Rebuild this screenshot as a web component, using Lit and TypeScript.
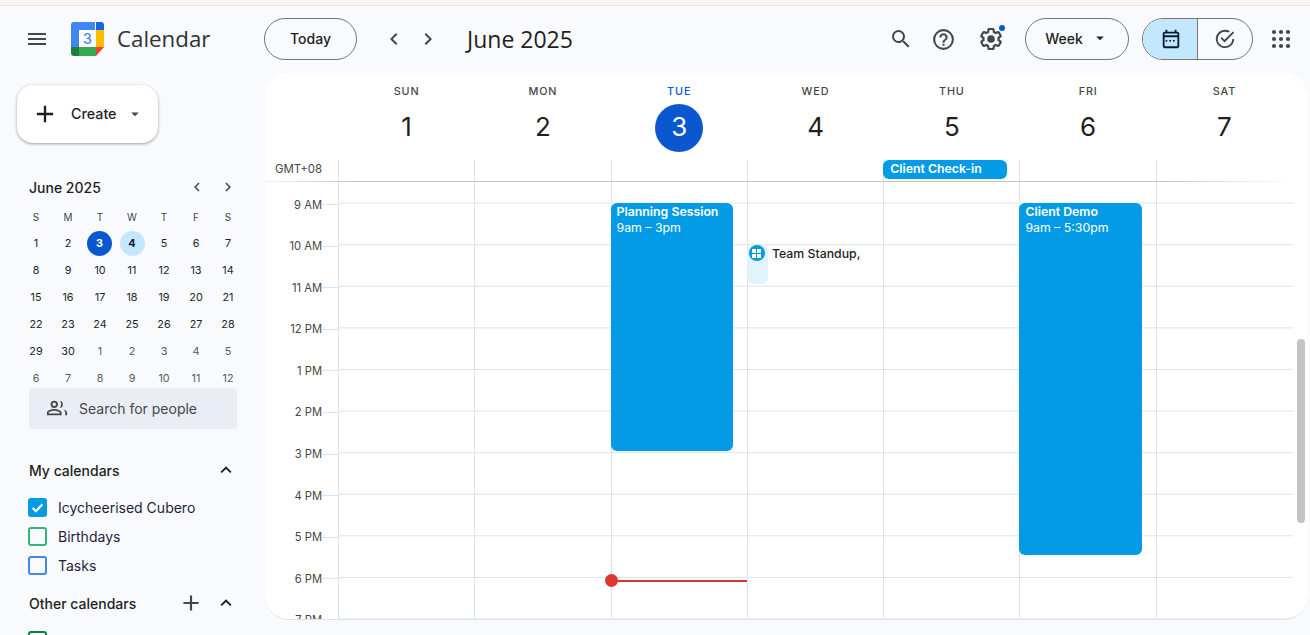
import { LitElement, html, css, svg } from 'lit';
import { customElement } from 'lit/decorators.js';

const icon = (size: number, body: unknown, fill = '#444746') => html`
  <svg width=${size} height=${size} viewBox="0 0 24 24" fill=${fill}>${body}</svg>
`;

const chevLeft = svg`<path d="M15.4 7.4 14 6l-6 6 6 6 1.4-1.4-4.6-4.6z"/>`;
const chevRight = svg`<path d="M8.6 16.6 10 18l6-6-6-6-1.4 1.4 4.6 4.6z"/>`;
const chevUp = svg`<path d="M7.4 15.4 12 10.8l4.6 4.6L18 14l-6-6-6 6z"/>`;
const caret = svg`<path d="M7 10l5 5 5-5z"/>`;
const plus = svg`<path d="M19 13h-6v6h-2v-6H5v-2h6V5h2v6h6z"/>`;
const menu = svg`<path d="M3 18h18v-2H3zm0-5h18v-2H3zm0-7v2h18V6z"/>`;
const search = svg`<path d="M15.5 14h-.79l-.28-.27A6.471 6.471 0 0 0 16 9.5 6.5 6.5 0 1 0 9.5 16c1.61 0 3.09-.59 4.23-1.57l.27.28v.79l5 4.99L20.49 19l-4.99-5zm-6 0C7.01 14 5 11.99 5 9.5S7.01 5 9.5 5 14 7.01 14 9.5 11.99 14 9.5 14z"/>`;
const help = svg`<path d="M11 18h2v-2h-2zm1-16a10 10 0 1 0 0 20 10 10 0 0 0 0-20zm0 18a8 8 0 1 1 0-16 8 8 0 0 1 0 16zm0-14a4 4 0 0 0-4 4h2a2 2 0 1 1 4 0c0 2-3 1.75-3 5h2c0-2.25 3-2.5 3-5a4 4 0 0 0-4-4z"/>`;
const gear = svg`<path d="M13.85 22.25h-3.7c-.74 0-1.36-.54-1.45-1.27l-.27-1.89c-.27-.14-.53-.29-.79-.46l-1.8.72c-.7.26-1.47-.03-1.81-.65L2.2 15.53c-.35-.66-.2-1.44.36-1.88l1.53-1.19c-.01-.15-.02-.3-.02-.46s.01-.31.02-.46l-1.52-1.19c-.59-.45-.74-1.26-.37-1.88l1.85-3.19c.34-.62 1.11-.9 1.79-.63l1.81.73c.26-.17.52-.32.78-.46l.27-1.91c.09-.7.71-1.26 1.44-1.26h3.7c.74 0 1.36.54 1.45 1.27l.27 1.89c.27.14.53.29.79.46l1.8-.72c.71-.26 1.48.03 1.82.65l1.84 3.18c.36.66.2 1.44-.36 1.88l-1.52 1.19c.01.15.02.3.02.46s-.01.31-.02.46l1.52 1.19c.56.45.72 1.23.37 1.86l-1.86 3.22c-.34.62-1.11.9-1.8.63l-1.8-.72c-.26.17-.52.32-.78.46l-.27 1.91c-.1.68-.72 1.22-1.46 1.22zm-3.23-2h2.76l.37-2.55.53-.22c.44-.18.88-.44 1.34-.78l.45-.34 2.38.96 1.38-2.4-2.03-1.58.07-.56c.03-.26.06-.51.06-.78s-.03-.53-.06-.78l-.07-.56 2.03-1.58-1.39-2.4-2.39.96-.45-.35c-.42-.32-.87-.58-1.33-.77l-.52-.22-.37-2.55h-2.76l-.37 2.55-.53.21c-.44.19-.88.44-1.34.79l-.45.33-2.38-.95-1.39 2.39 2.03 1.58-.07.56a7 7 0 0 0-.06.79c0 .26.02.53.06.78l.07.56-2.03 1.58 1.38 2.4 2.39-.96.45.35c.43.33.86.58 1.33.77l.53.22.38 2.55zM12 15.5a3.5 3.5 0 1 1 0-7 3.5 3.5 0 0 1 0 7z"/>`;
const calIcon = svg`<path d="M5 22a2 2 0 0 1-2-2V6a2 2 0 0 1 2-2h1V2h2v2h8V2h2v2h1a2 2 0 0 1 2 2v14a2 2 0 0 1-2 2zm0-2h14V10H5zM5 8h14V6H5zm3 6a1 1 0 1 1 0-.01zm4 0a1 1 0 1 1 0-.01zm4 0a1 1 0 1 1 0-.01z"/>`;
const taskIcon = svg`<path d="M22 5.2 20.6 3.8 11.5 12.9 8.4 9.8 7 11.2l4.5 4.5zM12 20a8 8 0 1 1 3.9-15l1.5-1.5A10 10 0 1 0 22 12h-2a8 8 0 0 1-8 8z"/>`;
const people = svg`<path d="M9 12a4 4 0 1 0 0-8 4 4 0 0 0 0 8zm0-6a2 2 0 1 1 0 4 2 2 0 0 1 0-4zm0 7c-2.7 0-8 1.3-8 4v3h16v-3c0-2.7-5.3-4-8-4zm6 5H3v-1c.2-.7 3.300-2 6-2s5.800 1.300 6 2zm.5-6.100A4 4 0 0 0 15 4.100a6 6 0 0 1 0 7.800zM19 13.500c1.300.9 2 2 2 3.500v3h2v-3c0-1.900-2.300-3.100-4-3.500z"/>`;
const appsDots = [5, 12, 19].flatMap((y) =>
  [5, 12, 19].map((x) => svg`<circle cx=${x} cy=${y} r="2.1"/>`)
);

const logo = html`
  <svg width="33" height="34" viewBox="0 0 33 34">
    <path d="M3 0h21v8H8v17H0V3a3 3 0 0 1 3-3z" fill="#4285f4"/>
    <path d="M25 0h5a3 3 0 0 1 3 3v5h-8z" fill="#1967d2"/>
    <rect x="25" y="8" width="8" height="17" fill="#fbbc04"/>
    <rect x="8" y="25" width="17" height="9" fill="#34a853"/>
    <path d="M0 25h8v9H3a3 3 0 0 1-3-3z" fill="#188038"/>
    <path d="M25 25h8l-8 9z" fill="#ea4335"/>
    <rect x="8" y="8" width="17" height="17" fill="#fff"/>
    <text x="16.500" y="22" text-anchor="middle" font-size="14" font-weight="500" font-family="Inter, sans-serif" fill="#4285f4">3</text>
  </svg>
`;

const WEEK = [
  { name: 'SUN', num: 1 },
  { name: 'MON', num: 2 },
  { name: 'TUE', num: 3, today: true },
  { name: 'WED', num: 4 },
  { name: 'THU', num: 5 },
  { name: 'FRI', num: 6 },
  { name: 'SAT', num: 7 },
];

const HOURS = ['9 AM', '10 AM', '11 AM', '12 PM', '1 PM', '2 PM', '3 PM', '4 PM', '5 PM', '6 PM', '7 PM'];

const MINI_HEAD = ['S', 'M', 'T', 'W', 'T', 'F', 'S'];
const MINI_DAYS = [
  1, 2, 3, 4, 5, 6, 7, 8, 9, 10, 11, 12, 13, 14, 15, 16, 17, 18, 19, 20, 21,
  22, 23, 24, 25, 26, 27, 28, 29, 30, 1, 2, 3, 4, 5, 6, 7, 8, 9, 10, 11, 12,
];

@customElement('app-root')
export class AppRoot extends LitElement {
  static styles = css`
    :host {
      display: block;
      width: 1310px;
      height: 635px;
      overflow: hidden;
      background: #f8fafd;
      color: #1f1f1f;
      font-family: Inter, 'Liberation Sans', sans-serif;
      --line: #dde3ea;
    }
    svg { display: block; flex: none; }
    .strip {
      height: 5px;
      background: #fdf4f1;
      border-bottom: 1px solid #eadfe2;
    }

    .topbar {
      height: 67px;
      display: flex;
      align-items: center;
      padding-bottom: 1px;
      box-sizing: border-box;
    }
    .brand {
      width: 264px;
      box-sizing: border-box;
      padding-left: 25px;
      display: flex;
      align-items: center;
    }
    .brand .logo { margin-left: 22px; }
    .brand .word {
      margin-left: 13px;
      padding-bottom: 2px;
      font-family: 'Open Sans', sans-serif;
      font-size: 22.3px;
      color: #303134;
    }
    .pill {
      box-sizing: border-box;
      height: 42px;
      padding-bottom: 2px;
      border: 1px solid #747775;
      border-radius: 21px;
      display: flex;
      align-items: center;
      justify-content: center;
      font-size: 14px;
      font-weight: 500;
    }
    .today-btn { width: 93px; }
    .nav { display: flex; gap: 10px; margin-left: 25px; }
    .title { margin-left: 27px; font-size: 23px; font-family: 'Open Sans', sans-serif; }
    .spacer { flex: 1; }
    .tools { display: flex; align-items: center; gap: 18px; }
    .gear { position: relative; margin-left: 4px; }
    .gear::after {
      content: '';
      position: absolute;
      top: -1px;
      right: -1px;
      width: 6px;
      height: 6px;
      border-radius: 50%;
      background: #0b57d0;
    }
    .week { width: 104px; margin-left: 21px; gap: 8px; }
    .toggle {
      box-sizing: border-box;
      width: 111px;
      height: 42px;
      margin-left: 13px;
      border: 1px solid #747775;
      border-radius: 21px;
      display: flex;
      overflow: hidden;
    }
    .toggle div { flex: 1; display: flex; align-items: center; justify-content: center; }
    .toggle .on { background: #c2e7ff; border-right: 1px solid #747775; flex: none; width: 55px; padding-left: 2px; box-sizing: border-box; }
    .apps { margin: 0 17px 0 16px; }

    .body { display: flex; height: 562px; }
    .side { width: 265px; flex: none; box-sizing: border-box; padding: 12px 0 0 17px; overflow: hidden; }
    .create {
      width: 141px;
      height: 58px;
      box-sizing: border-box;
      padding-left: 14px;
      background: #fff;
      border-radius: 16px;
      box-shadow: 0 1px 3px 1px rgba(60, 64, 67, .15), 0 1px 2px rgba(60, 64, 67, .3);
      display: flex;
      align-items: center;
      font-size: 14.3px;
      font-weight: 500;
    }
    .create span { margin: 0 9px 2px 12px; }

    .mini { width: 224px; margin: 30px 0 0 3px; }
    .mini-head {
      display: flex;
      align-items: center;
      height: 28px;
      padding-left: 9px;
      font-size: 14px;
      font-weight: 500;
      gap: 13px;
    }
    .mini-head .name { flex: 1; }
    .mini-head svg:last-child { margin-right: 7px; }
    .mini-grid {
      display: grid;
      grid-template-columns: repeat(7, 32px);
      grid-auto-rows: 27px;
      margin-top: 2px;
      font-size: 10.8px;
      font-weight: 400;
      text-align: center;
    }
    .mini-grid > div { display: flex; align-items: center; justify-content: center; }
    .mini-grid .dow { font-size: 10px; color: #444746; }
    .mini-grid .muted { color: #565a5e; }
    .mini-grid b {
      width: 25px;
      height: 25px;
      border-radius: 50%;
      display: flex;
      align-items: center;
      justify-content: center;
      font-weight: 700;
    }
    .mini-grid .cur { background: #0b57d0; color: #fff; margin-right: 1px; }
    .mini-grid .sel { background: #c2e7ff; color: #001d35; }
    .people {
      box-sizing: border-box;
      width: 208px;
      height: 41px;
      margin: -4px 0 0 12px;
      padding: 0 0 1px 17px;
      background: #e9eef6;
      border-radius: 4px;
      display: flex;
      align-items: center;
      gap: 11px;
      font-size: 14px;
      color: #444746;
    }

    .cal-head {
      display: flex;
      align-items: center;
      width: 210px;
      margin-left: 12px;
      font-size: 14px;
      font-weight: 500;
    }
    .cal-head .name { flex: 1; }
    .cal-head svg { margin-right: 2px; }
    .mine { margin-top: 30px; height: 22px; }
    .other { margin-top: 17px; height: 22px; }
    .other svg:nth-of-type(1) { margin-right: 11px; }
    .cal-list { margin: 17px 0 0 11px; display: flex; flex-direction: column; gap: 10px; font-size: 14px; color: #1f1f3a; }
    .cal-row { display: flex; align-items: center; gap: 11px; height: 19px; white-space: nowrap; }
    .check {
      box-sizing: border-box;
      width: 19px;
      height: 19px;
      border: 2px solid var(--c);
      border-radius: 3px;
      display: flex;
      align-items: center;
      justify-content: center;
    }
    .check.fill { background: var(--c); }

    .panel {
      flex: 1;
      height: 547px;
      background: #fff;
      border-radius: 24px;
      overflow: hidden;
      position: relative;
      margin-right: 2px;
      box-sizing: border-box;
      border-bottom: 1px solid var(--line);
    }
    .days {
      display: grid;
      grid-template-columns: 73px repeat(7, 136.3px);
      height: 87px;
      text-align: center;
    }
    .day { padding-top: 12px; box-sizing: border-box; }
    .day .dn { padding-left: 1px; font-size: 10.8px; font-weight: 500; letter-spacing: .9px; color: #444746; height: 14px; line-height: 14px; }
    .day .num {
      box-sizing: border-box;
      width: 48px;
      height: 48px;
      margin: 5px auto 0;
      padding: 0 0 4px 1px;
      border-radius: 50%;
      font-size: 26px;
      display: flex;
      align-items: center;
      justify-content: center;
      color: #1f1f1f;
    }
    .day.today .dn { color: #0b57d0; }
    .day.today .num { background: #0b57d0; color: #fff; }

    .allday {
      display: grid;
      grid-template-columns: 73px repeat(7, 136.3px);
      height: 22px;
      position: relative;
      box-sizing: border-box;
    }
    .allday::after {
      content: '';
      position: absolute;
      left: 0;
      right: 14px;
      bottom: 0;
      height: 1px;
      background: linear-gradient(to right, #f2f2f2 0, #c4c7c9 8%, #c4c7c9 88%, #fff 100%);
    }
    .gmt { font-size: 11.4px; color: #444746; text-align: right; padding: 2px 16px 0 0; line-height: 14px; }
    .slot { border-left: 1px solid var(--line); position: relative; }
    .chip {
      position: absolute;
      top: 0;
      left: -1px;
      width: 124px;
      height: 19px;
      box-sizing: border-box;
      padding-left: 7px;
      background: #039be5;
      color: #fff;
      border-radius: 6px;
      font-size: 12.3px;
      font-weight: 600;
      line-height: 18px;
      white-space: nowrap;
      z-index: 1;
    }

    .grid {
      position: relative;
      display: flex;
      height: 438px;
    }
    .times { width: 57px; flex: none; padding-top: 13.500px; }
    .time {
      height: 41.6px;
      font-size: 11.2px;
      color: #444746;
      text-align: right;
      line-height: 18px;
      box-sizing: border-box;
    }
    .cols { flex: 1; position: relative; }
    .columns {
      display: grid;
      grid-template-columns: repeat(7, 136.3px);
      margin-left: 16px;
      height: 100%;
      position: relative;
      background-image: repeating-linear-gradient(to bottom, transparent 0, transparent 40.6px, var(--line) 40.6px, var(--line) 41.6px);
      background-position: 0 21.6px;
      background-size: 100% 41.6px;
      width: 955px;
    }
    .col { border-left: 1px solid var(--line); position: relative; }
    .hticks {
      position: absolute;
      left: 0;
      top: 21.6px;
      width: 16px;
      height: 100%;
      background-image: repeating-linear-gradient(to bottom, var(--line) 0, var(--line) 1px, transparent 1px, transparent 41.6px);
    }
    .event {
      position: absolute;
      left: -1px;
      top: 21px;
      box-sizing: border-box;
      background: #039be5;
      color: #fff;
      border-radius: 6px;
      padding: 1px 6px;
      font-size: 12.3px;
      line-height: 16px;
      z-index: 1;
    }
    .event strong { display: block; font-weight: 600; }
    .standup {
      position: absolute;
      left: -1px;
      top: 63px;
      width: 21px;
      height: 39px;
      background: #e1f3fd;
      border-radius: 6px;
    }
    .standup i {
      position: absolute;
      left: 2px;
      top: 0;
      width: 16px;
      height: 16px;
      border-radius: 50%;
      background: #039be5;
      display: flex;
      align-items: center;
      justify-content: center;
    }
    .standup-label { position: absolute; left: 24px; top: 64px; font-size: 12.3px; font-weight: 450; line-height: 16px; white-space: nowrap; }
    .now { position: absolute; left: 0; right: 0; top: 398px; height: 2px; background: #dc362e; z-index: 2; }
    .now::before {
      content: '';
      position: absolute;
      left: -7px;
      top: -6px;
      width: 13px;
      height: 13px;
      border-radius: 50%;
      background: #dc362e;
    }
    .thumb {
      position: absolute;
      left: 1297px;
      top: 339px;
      width: 8px;
      height: 184px;
      border-radius: 4px;
      background: #c4c4c4;
      z-index: 3;
    }
  `;

  private renderMini() {
    return html`
      <div class="mini">
        <div class="mini-head">
          <span class="name">June 2025</span>
          ${icon(18, chevLeft)}${icon(18, chevRight)}
        </div>
        <div class="mini-grid">
          ${MINI_HEAD.map((d) => html`<div class="dow">${d}</div>`)}
          ${MINI_DAYS.map((d, i) => {
            const muted = i >= 30;
            if (i === 2) return html`<div><b class="cur">3</b></div>`;
            if (i === 3) return html`<div><b class="sel">4</b></div>`;
            return html`<div class=${muted ? 'muted' : ''}>${d}</div>`;
          })}
        </div>
      </div>
    `;
  }

  private renderCal(name: string, color: string, checked = false) {
    return html`
      <div class="cal-row">
        <div class="check ${checked ? 'fill' : ''}" style="--c:${color}">
          ${checked
            ? html`<svg width="13" height="13" viewBox="0 0 24 24" fill="none" stroke="#fff" stroke-width="4"><path d="M3 13l6 6L21 6"/></svg>`
            : ''}
        </div>
        <span>${name}</span>
      </div>
    `;
  }

  private renderSide() {
    return html`
      <aside class="side">
        <div class="create">
          ${icon(28, plus, '#1f1f1f')}
          <span>Create</span>
          ${icon(18, caret)}
        </div>
        ${this.renderMini()}
        <div class="people">${icon(22, people)}<span>Search for people</span></div>
        <div class="cal-head mine">
          <span class="name">My calendars</span>
          ${icon(22, chevUp, '#1f1f1f')}
        </div>
        <div class="cal-list">
          ${this.renderCal('Icycheerised Cubero', '#039be5', true)}
          ${this.renderCal('Birthdays', '#33b679')}
          ${this.renderCal('Tasks', '#4285f4')}
        </div>
        <div class="cal-head other">
          <span class="name">Other calendars</span>
          ${icon(26, plus)}${icon(22, chevUp, '#1f1f1f')}
        </div>
        <div class="cal-list">
          ${this.renderCal('Holidays in Philippines', '#0b8043')}
        </div>
      </aside>
    `;
  }

  private renderGrid() {
    return html`
      <div class="grid">
        <div class="times">
          ${HOURS.map((h) => html`<div class="time">${h}</div>`)}
        </div>
        <div class="cols">
          <div class="hticks"></div>
          <div class="columns">
            ${WEEK.map((d, i) => html`
              <div class="col">
                ${i === 2 ? html`
                  <div class="event" style="width:122px;height:248px">
                    <strong>Planning Session</strong>9am – 3pm
                  </div>
                  <div class="now"></div>
                ` : ''}
                ${i === 3 ? html`
                  <div class="standup">
                    <i><svg width="9" height="9" viewBox="0 0 9 9" fill="#fff"><path d="M0 0h4v4H0zM5 0h4v4H5zM0 5h4v4H0zM5 5h4v4H5z"/></svg></i>
                  </div>
                  <div class="standup-label">Team Standup,</div>
                ` : ''}
                ${i === 5 ? html`
                  <div class="event" style="width:123px;height:352px">
                    <strong>Client Demo</strong>9am – 5:30pm
                  </div>
                ` : ''}
              </div>
            `)}
          </div>
        </div>
      </div>
    `;
  }

  render() {
    return html`
      <div class="strip"></div>
      <header class="topbar">
        <div class="brand">
          ${icon(24, menu)}
          <div class="logo">${logo}</div>
          <div class="word">Calendar</div>
        </div>
        <div class="pill today-btn">Today</div>
        <div class="nav">${icon(24, chevLeft)}${icon(24, chevRight)}</div>
        <div class="title">June 2025</div>
        <div class="spacer"></div>
        <div class="tools">
          ${icon(24, search)}${icon(25, help)}
          <div class="gear">${icon(26, gear)}</div>
        </div>
        <div class="pill week">Week ${icon(18, caret, '#1f1f1f')}</div>
        <div class="toggle">
          <div class="on">${icon(22, calIcon, '#001d35')}</div>
          <div>${icon(22, taskIcon)}</div>
        </div>
        <div class="apps">${icon(24, appsDots)}</div>
      </header>
      <div class="body">
        ${this.renderSide()}
        <main class="panel">
          <div class="days">
            <div></div>
            ${WEEK.map((d) => html`
              <div class="day ${d.today ? 'today' : ''}">
                <div class="dn">${d.name}</div>
                <div class="num">${d.num}</div>
              </div>
            `)}
          </div>
          <div class="allday">
            <div class="gmt">GMT+08</div>
            ${WEEK.map((d, i) => html`
              <div class="slot">${i === 4 ? html`<div class="chip">Client Check-in</div>` : ''}</div>
            `)}
          </div>
          ${this.renderGrid()}
        </main>
      </div>
      <div class="thumb"></div>
    `;
  }
}
